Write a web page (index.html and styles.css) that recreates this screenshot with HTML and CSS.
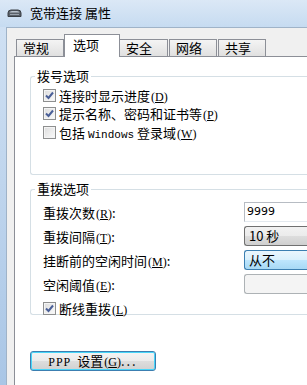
FILE: index.html
```html
<!DOCTYPE html>
<html lang="zh-CN">

<head>
    <meta charset="UTF-8">
    <meta name="viewport" content="width=device-width, initial-scale=1.0">
    <title>宽带连接 属性</title>
    <link rel="stylesheet" href="styles.css">
</head>

<body>

    <div id="window">
        <div id="title-bar">
            <svg class="title-icon" width="15" height="8" viewBox="0 0 15 8">
                <path d="M1 7.5 L1 4 Q1 1 4 1 L11 1 Q14 1 14 4 L14 7.5 Z" fill="#5a6068" stroke="#3a3f45" stroke-width="1"/>
                <path d="M2.5 3.5 Q3 2 5 2 L10 2 Q12 2 12.5 3.5 Z" fill="#b9c2cc"/>
                <rect x="3" y="5" width="9" height="1" fill="#9aa3ad"/>
            </svg>
            <span class="title-text">宽带连接 属性</span>
        </div>

        <div id="frame">
            <div id="tabs">
                <div class="tab">常规</div>
                <div class="tab active">选项</div>
                <div class="tab">安全</div>
                <div class="tab">网络</div>
                <div class="tab">共享</div>
            </div>

            <div id="panel">
                <fieldset class="group dial-group">
                    <legend>拨号选项</legend>
                    <div class="check-row">
                        <span class="checkbox checked"></span>
                        <span>连接时显示进度<span class="key">(<u>D</u>)</span></span>
                    </div>
                    <div class="check-row">
                        <span class="checkbox checked"></span>
                        <span>提示名称、密码和证书等<span class="key">(<u>P</u>)</span></span>
                    </div>
                    <div class="check-row">
                        <span class="checkbox"></span>
                        <span>包括 <span class="mono">Windows</span> 登录域<span class="key">(<u>W</u>)</span></span>
                    </div>
                </fieldset>

                <fieldset class="group redial-group">
                    <legend>重拨选项</legend>
                    <div class="field-row">
                        <span class="field-label">重拨次数<span class="key">(<u>R</u>)</span>:</span>
                        <span class="field text-field">9999</span>
                    </div>
                    <div class="field-row">
                        <span class="field-label">重拨间隔<span class="key">(<u>T</u>)</span>:</span>
                        <span class="field combo">10 秒</span>
                    </div>
                    <div class="field-row">
                        <span class="field-label">挂断前的空闲时间<span class="key">(<u>M</u>)</span>:</span>
                        <span class="field combo hot">从不</span>
                    </div>
                    <div class="field-row">
                        <span class="field-label">空闲阈值<span class="key">(<u>E</u>)</span>:</span>
                        <span class="field combo disabled"></span>
                    </div>
                    <div class="check-row redial-check">
                        <span class="checkbox checked"></span>
                        <span>断线重拨<span class="key">(<u>L</u>)</span></span>
                    </div>
                </fieldset>

                <button type="button" class="ppp-button"><span class="mono">PPP</span> 设置<span class="key">(<u>G</u>)</span><span class="dots">...</span></button>
            </div>
        </div>
    </div>

</body>

</html>
```

FILE: styles.css
```css
body {
    font-family: "Noto Sans CJK SC", "Liberation Sans", sans-serif;
    font-size: 13px;
    color: #000;
    margin: 0;
    padding: 0;
    width: 307px;
    height: 385px;
    overflow: hidden;
    background: linear-gradient(to bottom, #d2e2f4 0%, #c2d7ee 40%, #a9c6e6 100%);
}

#window {
    height: 100%;
    display: flex;
    flex-direction: column;
}

#title-bar {
    height: 27px;
    display: flex;
    align-items: center;
    padding-left: 7px;
    background: linear-gradient(to bottom, #dbe8f6, #c6dbf1);
}

.title-icon {
    margin-top: -1px;
}

.title-text {
    margin-left: 8px;
    margin-top: -1px;
    line-height: 16px;
}

#frame {
    flex: 1;
    margin-left: 6px;
    border-top: 1px solid #9fb3c8;
    border-left: 1px solid #9fb3c8;
    background-color: #f0f0f0;
    padding-left: 7px;
    display: flex;
    flex-direction: column;
}

#tabs {
    height: 28px;
    display: flex;
    align-items: flex-end;
    padding-left: 2px;
}

.tab {
    box-sizing: border-box;
    width: 48px;
    height: 17px;
    margin-right: 1px;
    border: 1px solid #8c8f97;
    border-bottom: none;
    background: linear-gradient(to bottom, #f4f4f4, #e0e0e0);
    font-size: 13px;
    line-height: 16px;
    padding-left: 6px;
}

.tab.active {
    position: relative;
    z-index: 1;
    width: 56px;
    height: 23px;
    margin-left: -1px;
    margin-right: 0;
    margin-bottom: -1px;
    background: #fff;
    padding-left: 8px;
    line-height: 20px;
}

.tab.active + .tab {
    width: 49px;
    margin-left: -1px;
}

#panel {
    flex: 1;
    border-top: 1px solid #8c8f97;
    border-left: 1px solid #8c8f97;
    background-color: #fff;
    padding: 11px 0 0 15px;
}

.group {
    margin: 0;
    padding: 0 0 0 12px;
    border: 1px solid #d5dfe5;
    border-right: none;
    border-radius: 3px 0 0 3px;
}

.group legend {
    padding: 0 2px;
    margin-left: -8px;
    line-height: 16px;
}

.dial-group {
    height: 103px;
    padding-top: 2px;
}

.redial-group {
    margin-top: 6px;
    height: 129px;
    padding-top: 3px;
}

.check-row {
    display: flex;
    align-items: center;
    height: 18.5px;
    gap: 3px;
}

.redial-check {
    margin-top: 3px;
}

.checkbox {
    box-sizing: border-box;
    width: 13px;
    height: 13px;
    border: 1px solid #8e8f8f;
    background: linear-gradient(135deg, #dcdcdc, #fbfbfb);
    box-shadow: inset 0 0 0 1px #f4f4f4;
}

.checkbox.checked {
    background:
        url("data:image/svg+xml;utf8,<svg xmlns='http://www.w3.org/2000/svg' width='11' height='11' viewBox='0 0 11 11'><path d='M2 5.5 L4.5 8 L9 2.5' fill='none' stroke='%234a5f97' stroke-width='2'/></svg>") center / 11px 11px no-repeat,
        linear-gradient(135deg, #dcdcdc, #fbfbfb);
}

.key {
    font-family: "Liberation Serif", serif;
    font-size: 12px;
    margin-left: 1px;
}

.mono {
    font-family: "Liberation Mono", monospace;
    font-size: 11px;
}

.field-row {
    display: flex;
    align-items: center;
    justify-content: space-between;
    height: 24px;
}

.field {
    box-sizing: border-box;
    width: 63px;
    height: 20px;
    border: 1px solid #abadb3;
    border-right: none;
    line-height: 18px;
    padding-left: 2px;
    font-size: 13px;
}

.text-field {
    font-family: "DejaVu Sans", sans-serif;
    font-size: 11px;
    border-color: #b7bcc3 #e3e9ef #e3e9ef #b7bcc3;
}

.combo {
    border-radius: 3px 0 0 3px;
    border-color: #707070;
    background: linear-gradient(to bottom, #f2f2f2 0%, #ebebeb 50%, #dddddd 51%, #cfcfcf 100%);
    padding-left: 4px;
}

.combo.hot {
    border-color: #3c7fb1;
    background: linear-gradient(to bottom, #eaf6fd 0%, #d9f0fc 50%, #bee6fd 51%, #a7d9f5 100%);
}

.combo.disabled {
    border-color: #adb2b5;
    background: #f4f4f4;
}

.ppp-button {
    box-sizing: border-box;
    margin-top: 36px;
    width: 126px;
    height: 20px;
    padding: 0;
    border: 1px solid #3c7fb1;
    border-radius: 3px;
    box-shadow: inset 0 0 0 1px #48d6f9;
    background: linear-gradient(to bottom, #f4f4f4 0%, #ebebeb 50%, #dddddd 51%, #d1d1d1 100%);
    font-family: "Noto Sans CJK SC", sans-serif;
    font-size: 13px;
    line-height: 16px;
    color: #000;
}

.ppp-button .mono {
    font-family: "Liberation Serif", serif;
    font-size: 12px;
    letter-spacing: 1px;
    margin-right: 3px;
}

.ppp-button .dots {
    letter-spacing: 2px;
}
```
